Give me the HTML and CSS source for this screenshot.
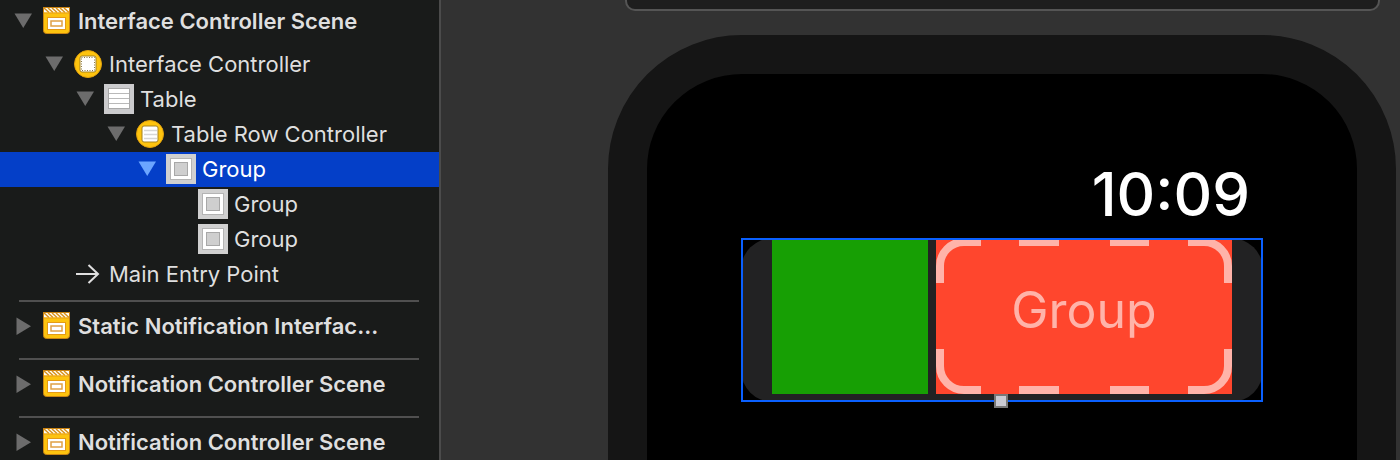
FILE: index.html
```html
<!DOCTYPE html>
<html lang="en">
<head>
<meta charset="utf-8">
<title>Interface Builder</title>
<link rel="stylesheet" href="styles.css">
</head>
<body>
<svg class="defs" width="0" height="0" aria-hidden="true">
  <symbol id="scene" viewBox="0 0 27 27">
    <path d="M0.5 1h26v22.500q0 3-3 3h-20q-3 0-3-3z" fill="#fdc30f" stroke="#c98312"/>
    <path d="M1 1h25v4.500h-25z" fill="#fffdf5"/>
    <path d="M1 1l5 4.500M5 1l5 4.500M9 1l5 4.500M13 1l5 4.500M17 1l5 4.500M21 1l5 4.500" stroke="#d9921c" stroke-width="1.500"/>
    <path d="M0 .5h27" stroke="#c98312"/><path d="M1 6h25" stroke="#eaa016"/>
    <rect x="4.500" y="10.500" width="18" height="12" fill="#fff" stroke="#e59b16"/>
    <rect x="8" y="14" width="11" height="5" fill="#fff" stroke="#e0a044" stroke-width="1.500"/>
  </symbol>
  <symbol id="controller" viewBox="0 0 28 28">
    <circle cx="14" cy="14" r="13.500" fill="#fec40f" stroke="#e3a20c"/>
    <rect x="6" y="6" width="16" height="16" rx="2" fill="#fff" stroke="#a58320"/>
    <rect x="7.500" y="7.500" width="13" height="13" fill="none" stroke="#8c7a45" stroke-dasharray="1 1.500"/>
  </symbol>
  <symbol id="rowcontroller" viewBox="0 0 28 28">
    <circle cx="14" cy="14" r="13.500" fill="#fec40f" stroke="#e3a20c"/>
    <rect x="6" y="6" width="16" height="16" rx="2" fill="#fff" stroke="#a58320"/>
    <path d="M8 10.500h13M8 14.500h13M8 18.500h13" stroke="#d6d6d6" stroke-width="1.500"/>
  </symbol>
  <symbol id="table" viewBox="0 0 30 30">
    <path d="M0 0h30v30h-30z" fill="#cbcbcd"/>
    <rect x="4.500" y="4.500" width="21" height="20" fill="#fff" stroke="#a9a9a9"/>
    <path d="M5 9.500h20M5 14.500h20M5 19.500h20" stroke="#b9b9b9"/>
  </symbol>
  <symbol id="group" viewBox="0 0 30 30">
    <path d="M0 0h30v30h-30z" fill="#d0d0d0"/>
    <rect x="4.500" y="4.500" width="21" height="21" fill="#fff" stroke="#b4b4b4"/>
    <rect x="8.500" y="8.500" width="13" height="13" fill="#cfcfcf" stroke="#a8a8a8"/>
  </symbol>
  <symbol id="down" viewBox="0 0 18 16"><path d="M.5 .5h17.500l-8.750 14.500z" fill="currentColor"/></symbol>
  <symbol id="right" viewBox="0 0 18 18"><path d="M2.500 .5v17.500l14.500-8.750z" fill="currentColor"/></symbol>
</svg>
<div class="editor">
  <nav class="outline" aria-label="Document outline">
    <div class="row scene first"><button class="toggle" aria-label="Collapse scene"><svg class="down"><use href="#down"/></svg></button><span class="icon"><svg class="i27"><use href="#scene"/></svg></span><span class="label">Interface Controller Scene</span></div>
    <ul class="tree">
      <li class="row l1"><button class="toggle" aria-label="Collapse"><svg class="down"><use href="#down"/></svg></button><span class="icon"><svg class="i28"><use href="#controller"/></svg></span><span class="label">Interface Controller</span></li>
      <li class="row l2"><button class="toggle" aria-label="Collapse"><svg class="down"><use href="#down"/></svg></button><span class="icon"><svg class="i30"><use href="#table"/></svg></span><span class="label">Table</span></li>
      <li class="row l3"><button class="toggle" aria-label="Collapse"><svg class="down"><use href="#down"/></svg></button><span class="icon"><svg class="i28"><use href="#rowcontroller"/></svg></span><span class="label">Table Row Controller</span></li>
      <li class="row l4 selected"><button class="toggle" aria-label="Collapse"><svg class="down"><use href="#down"/></svg></button><span class="icon"><svg class="i30"><use href="#group"/></svg></span><span class="label">Group</span></li>
      <li class="row l5"><span class="toggle"></span><span class="icon"><svg class="i30"><use href="#group"/></svg></span><span class="label">Group</span></li>
      <li class="row l5"><span class="toggle"></span><span class="icon"><svg class="i30"><use href="#group"/></svg></span><span class="label">Group</span></li>
      <li class="row l1"><span class="toggle"></span><span class="icon"><svg class="i28" viewBox="0 0 28 28"><path d="M2 14h22.500M14.500 5l9.500 9l-9.500 9" fill="none" stroke="#dfdfdf" stroke-width="2"/></svg></span><span class="label">Main Entry Point</span></li>
    </ul>
    <hr class="rule">
    <div class="row scene"><button class="toggle" aria-label="Expand scene"><svg class="right"><use href="#right"/></svg></button><span class="icon"><svg class="i27"><use href="#scene"/></svg></span><span class="label">Static Notification Interfac...</span></div>
    <hr class="rule">
    <div class="row scene"><button class="toggle" aria-label="Expand scene"><svg class="right"><use href="#right"/></svg></button><span class="icon"><svg class="i27"><use href="#scene"/></svg></span><span class="label">Notification Controller Scene</span></div>
    <hr class="rule">
    <div class="row scene"><button class="toggle" aria-label="Expand scene"><svg class="right"><use href="#right"/></svg></button><span class="icon"><svg class="i27"><use href="#scene"/></svg></span><span class="label">Notification Controller Scene</span></div>
  </nav>
  <main class="canvas">
    <div class="titlebar"></div>
    <div class="watch">
      <div class="clock">10:09</div>
      <div class="rowgroup">
        <div class="green"></div>
        <div class="red">
          <svg class="dashes" viewBox="0 0 296 156" aria-hidden="true">
            <path d="M4 45V28A24 24 0 0 1 28 4H45M83 4h40M174 4h39M252 4H268A24 24 0 0 1 292 28V45M292 111V128A24 24 0 0 1 268 152H252M213 152h-39M123 152h-40M45 152H28A24 24 0 0 1 4 128V111" fill="none" stroke="#ffb3a9" stroke-width="8"/>
          </svg>
          <span class="placeholder">Group</span>
        </div>
        <span class="handle"></span>
      </div>
    </div>
  </main>
</div>
</body>
</html>
```
FILE: styles.css
```css
* { box-sizing: border-box; }
body {
  margin: 0;
  background: #323232;
  font-family: Inter, "Liberation Sans", sans-serif;
  color: #dfdfdf;
}
.defs { position: absolute; }
.editor { display: flex; height: 100vh; overflow: hidden; }
.outline {
  flex: 0 0 441px;
  background: #191b1a;
  border-right: 2px solid #4b4b4b;
  overflow: hidden;
}
.tree { list-style: none; margin: 0; padding: 4px 0 1px; }
.row {
  display: flex;
  align-items: center;
  height: 35px;
  padding-left: 14px;
  padding-bottom: 1px;
  font-size: 22px;
  white-space: nowrap;
}
.scene { height: 49px; padding-bottom: 2px; font-weight: 600; }
.first { height: 43px; }
.l1 { padding-left: 45px; }
.l2 { padding-left: 76px; }
.l3 { padding-left: 107px; }
.l4 { padding-left: 138px; }
.l5 { padding-left: 170px; }
.selected { background: #043fc8; color: #fff; }
.toggle {
  flex: none;
  display: flex;
  justify-content: center;
  width: 18px;
  margin-right: 10px;
  padding: 0;
  border: 0;
  background: none;
  color: #6c6c6c;
}
.selected .toggle { color: #6ba5ff; }
.down { width: 18px; height: 16px; }
.right { width: 18px; height: 18px; }
.icon {
  flex: none;
  display: flex;
  justify-content: center;
  width: 30px;
  margin-right: 6px;
}
.scene .icon { padding-right: 1px; }
.i27 { width: 27px; height: 27px; }
.i28 { width: 28px; height: 28px; }
.i30 { width: 30px; height: 30px; }
.rule {
  height: 2px;
  margin: 7px 20px 0 19px;
  border: 0;
  background: #505050;
}
.canvas { flex: 1; min-width: 0; background: #323232; }
.titlebar {
  height: 11px;
  margin: 0 20px 0 184px;
  border: 2px solid #555;
  border-top: 0;
  border-radius: 0 0 10px 10px;
  background: #1e1e1e;
}
.watch {
  margin: 24px 4px 0 167px;
  height: 900px;
  padding: 90px 94px 0;
  border: 39px solid #151515;
  border-radius: 134px;
  background: #000;
}
.clock {
  height: 74px;
  padding-right: 13px;
  font-size: 60px;
  line-height: 60px;
  font-weight: 500;
  color: #fff;
  text-align: right;
}
.rowgroup {
  position: relative;
  display: flex;
  gap: 8px;
  height: 164px;
  padding: 0 31px 8px;
  border-radius: 32px;
  background: #222223;
}
.rowgroup::after {
  content: "";
  position: absolute;
  inset: 0;
  border: 2px solid #0a60ff;
}
.green { flex: 156; background: #179f04; }
.red {
  position: relative;
  flex: 296;
  display: flex;
  align-items: center;
  justify-content: center;
  padding-bottom: 12px;
  background: #ff462d;
}
.dashes { position: absolute; inset: 0; width: 100%; height: 100%; }
.placeholder { font-size: 50px; line-height: 60px; color: #ffb3a9; }
.handle {
  position: absolute;
  z-index: 1;
  left: 50%;
  bottom: -6px;
  width: 14px;
  height: 14px;
  margin-left: -8px;
  border: 2px solid #777;
  background: #c9cad2;
}
```
